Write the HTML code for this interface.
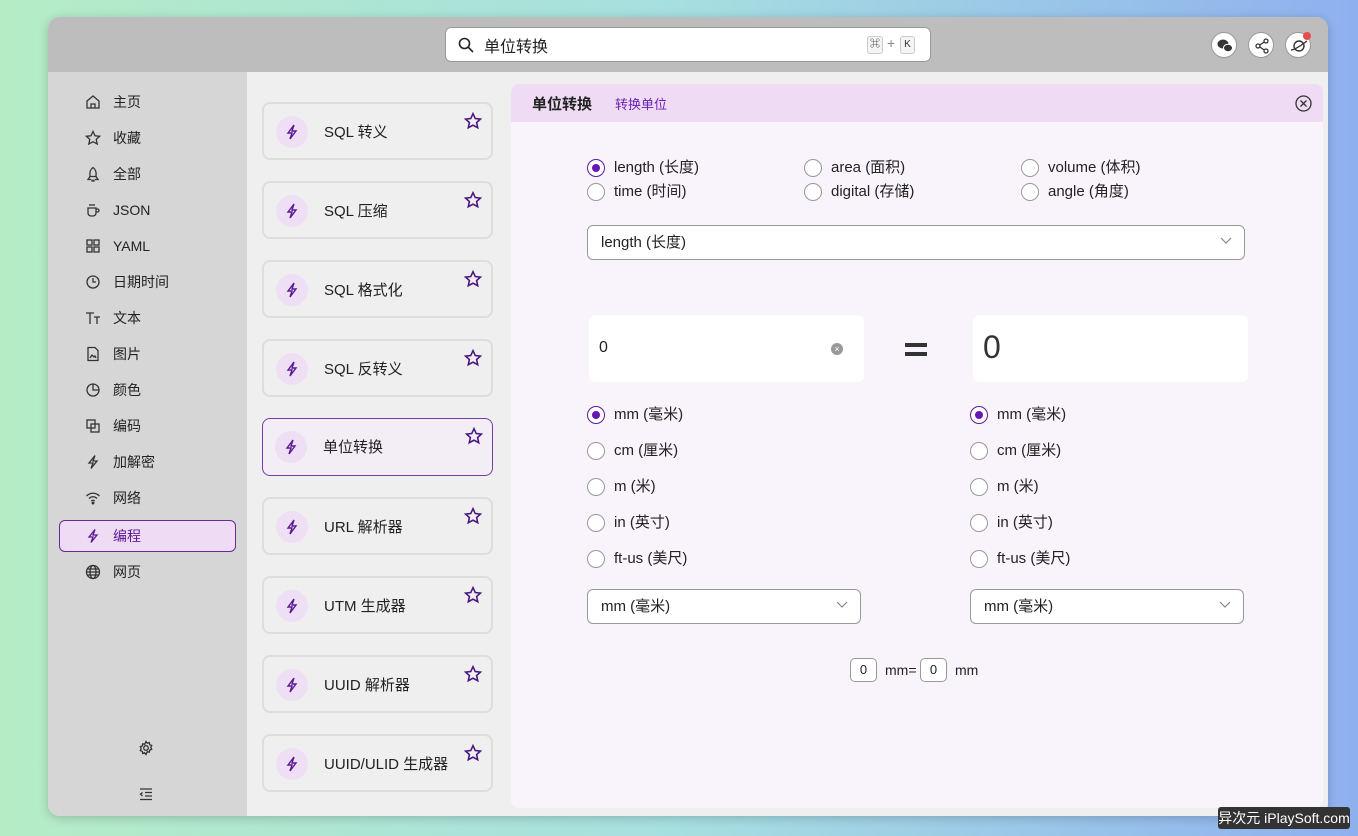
<!DOCTYPE html>
<html><head><meta charset="utf-8"><style>
*{box-sizing:border-box;margin:0;padding:0}
body{width:1358px;height:836px;overflow:hidden;position:relative;font-family:"Liberation Sans","Noto Sans CJK SC",sans-serif;color:#222;background:linear-gradient(90deg,#b5ecc6 0%,#a6dfe0 50%,#8fb0ef 100%)}
.a{position:absolute}
.win{left:48px;top:17px;width:1280px;height:799px;border-radius:12px;overflow:hidden;background:#efefef;box-shadow:0 2px 10px rgba(0,0,0,.2)}
.hdr{left:0;top:0;width:1280px;height:55px;background:#bdbdbd}
.side{left:0;top:55px;width:199px;height:744px;background:#d6d6d6}
.search{left:397px;top:10px;width:486px;height:35px;background:#fff;border:1px solid #999;border-radius:6px;font-size:16px}
.kb{top:8px;height:18px;border:1px solid #ccc;border-radius:3px;font-size:10px;line-height:16px;text-align:center;background:#f4f4f4;color:#333}
.cb{width:26px;height:26px;border-radius:50%;background:#fff;border:1px solid #999;top:15px}
.ni{left:37px;font-size:14px;height:20px;line-height:20px;color:#222}
.ni svg{position:absolute;left:0;top:2px}
.ni span{position:absolute;left:28px;white-space:nowrap}
.card{left:214px;width:231px;height:58px;border:2px solid #ddd;border-radius:8px;background:#f0eff0}
.card .ic{position:absolute;left:12px;top:12px;width:32px;height:32px;border-radius:50%;background:#efdff5}
.card .t{position:absolute;left:60px;top:17px;font-size:15px;color:#222;white-space:nowrap}
.card .st{position:absolute;right:9px;top:8px}
.panel{left:463px;top:67px;width:812px;height:724px;background:#f9f4fb;border-radius:8px;overflow:hidden}
.ph{left:0;top:0;width:812px;height:38px;background:#efdcf4}
.r{font-size:15px;white-space:nowrap;height:18px;line-height:18px}
.r i{position:absolute;left:0;top:0;width:18px;height:18px;border-radius:50%;border:1.5px solid #999;background:#fff}
.r i.on{border-color:#5c1a9a}
.r i.on:after{content:"";position:absolute;left:3.5px;top:3.5px;width:8px;height:8px;border-radius:50%;background:#6a16b0}
.r span{position:absolute;left:27px}
.sel{height:35px;border:1px solid #999;border-radius:6px;background:#fff;font-size:15px;line-height:33px;padding-left:13px}
.sel svg{position:absolute;right:12px;top:11px}
.inp{background:#fff;border-radius:6px;height:67px}
.sm{height:24px;width:27px;border:1px solid #999;border-radius:5px;background:#fff;font-size:13px;text-align:center;line-height:22px}
</style></head><body>
<div class="a win">
 <div class="a hdr">
  <div class="a search">
   <svg class="a" style="left:12px;top:9px" width="16" height="16" viewBox="0 0 16 16"><circle cx="6.5" cy="6.5" r="5" fill="none" stroke="#222" stroke-width="1.6"/><path d="M10.3 10.3L15 15" stroke="#222" stroke-width="1.6"/></svg>
   <span class="a" style="left:38px;top:5px">单位转换</span>
   <div class="a kb" style="left:421px;width:16px">⌘</div>
   <span class="a" style="left:441px;top:7px;font-size:14px;color:#888">+</span>
   <div class="a kb" style="left:454px;width:15px">K</div>
  </div>
  <div class="a cb" style="left:1163px"><svg class="a" style="left:5px;top:6px" width="16" height="14" viewBox="0 0 16 14"><ellipse cx="6" cy="5" rx="5.5" ry="4.5" fill="#333"/><ellipse cx="11" cy="9" rx="4.5" ry="3.8" fill="#333" stroke="#fff" stroke-width="1"/></svg></div>
  <div class="a cb" style="left:1200px"><svg class="a" style="left:5px;top:5px" width="16" height="16" viewBox="0 0 16 16"><circle cx="12" cy="3" r="2" fill="none" stroke="#333" stroke-width="1.3"/><circle cx="4" cy="8" r="2" fill="none" stroke="#333" stroke-width="1.3"/><circle cx="12" cy="13" r="2" fill="none" stroke="#333" stroke-width="1.3"/><path d="M5.8 7L10.2 4M5.8 9l4.4 3" stroke="#333" stroke-width="1.3"/></svg></div>
  <div class="a cb" style="left:1237px"><svg class="a" style="left:4px;top:5px" width="18" height="16" viewBox="0 0 18 16"><circle cx="9" cy="8" r="5" fill="none" stroke="#333" stroke-width="1.4"/><path d="M1 12C5 12 13 6 17 3" stroke="#333" stroke-width="1.4" fill="none"/></svg><div class="a" style="left:17px;top:-1px;width:8px;height:8px;border-radius:50%;background:#e94b4b"></div></div>
 </div>
 <div class="a side">
  <div class="a ni" style="top:20px"><svg width="16" height="16" viewBox="0 0 16 16" fill="none" stroke="#333" stroke-width="1.3"><path d="M2 7L8 2l6 5v7H2z"/><path d="M6 14v-4h4v4"/></svg><span>主页</span></div>
  <div class="a ni" style="top:56px"><svg width="16" height="16" viewBox="0 0 16 16" fill="none" stroke="#333" stroke-width="1.3"><path d="M8 1.5l2 4.3 4.6.5-3.4 3.1 1 4.6L8 11.7 3.8 14l1-4.6L1.4 6.3 6 5.8z"/></svg><span>收藏</span></div>
  <div class="a ni" style="top:92px"><svg width="16" height="16" viewBox="0 0 16 16" fill="none" stroke="#333" stroke-width="1.3"><path d="M8 1.5c3 2 3.5 5 3 9H5c-.5-4 0-7 3-9zM5 10.5l-2 3h3M11 10.5l2 3h-3M7 13.5v1.5h2v-1.5"/></svg><span>全部</span></div>
  <div class="a ni" style="top:128px"><svg width="16" height="16" viewBox="0 0 16 16" fill="none" stroke="#333" stroke-width="1.3"><path d="M3 6h8v5a3 3 0 01-3 3H6a3 3 0 01-3-3zM11 7h1.5a1.5 1.5 0 010 3H11M5 2v2M7 2v2M9 2v2"/></svg><span>JSON</span></div>
  <div class="a ni" style="top:164px"><svg width="16" height="16" viewBox="0 0 16 16" fill="none" stroke="#333" stroke-width="1.3"><rect x="2" y="2" width="5" height="5"/><rect x="9" y="2" width="5" height="5"/><rect x="2" y="9" width="5" height="5"/><rect x="9" y="9" width="5" height="5"/></svg><span>YAML</span></div>
  <div class="a ni" style="top:200px"><svg width="16" height="16" viewBox="0 0 16 16" fill="none" stroke="#333" stroke-width="1.3"><circle cx="8" cy="8" r="6"/><path d="M8 4v4h3"/></svg><span>日期时间</span></div>
  <div class="a ni" style="top:236px"><svg width="16" height="16" viewBox="0 0 16 16" fill="none" stroke="#333" stroke-width="1.3"><path d="M1 3h8M5 3v11M9 7h6M12 7v7"/></svg><span>文本</span></div>
  <div class="a ni" style="top:272px"><svg width="16" height="16" viewBox="0 0 16 16" fill="none" stroke="#333" stroke-width="1.3"><path d="M3 1.5h7l3 3v10H3z"/><path d="M5 12l2-3 2 2 1-1 1 2"/></svg><span>图片</span></div>
  <div class="a ni" style="top:308px"><svg width="16" height="16" viewBox="0 0 16 16" fill="none" stroke="#333" stroke-width="1.3"><circle cx="8" cy="8" r="6"/><path d="M8 2v6h6"/></svg><span>颜色</span></div>
  <div class="a ni" style="top:344px"><svg width="16" height="16" viewBox="0 0 16 16" fill="none" stroke="#333" stroke-width="1.3"><rect x="2" y="2" width="8" height="8"/><rect x="6" y="6" width="8" height="8"/></svg><span>编码</span></div>
  <div class="a ni" style="top:380px"><svg width="16" height="16" viewBox="0 0 16 16" fill="none" stroke="#333" stroke-width="1.3"><path d="M10 1.5L4 9h4l-2 5.5L12 7H8z"/></svg><span>加解密</span></div>
  <div class="a ni" style="top:416px"><svg width="16" height="16" viewBox="0 0 16 16" fill="none" stroke="#333" stroke-width="1.3"><path d="M1.5 6a9 9 0 0113 0M4 8.5a5.5 5.5 0 018 0M6.3 11a2.5 2.5 0 013.4 0"/><circle cx="8" cy="13" r=".8" fill="#333"/></svg><span>网络</span></div>
  <div class="a" style="left:11px;top:448px;width:177px;height:32px;border:1.5px solid #6a2a9a;border-radius:6px;background:#efdcf4"></div>
  <div class="a ni" style="top:454px;color:#5b1a93"><svg width="16" height="16" viewBox="0 0 16 16" fill="none" stroke="#5b1a93" stroke-width="1.3"><path d="M10 1.5L4 9h4l-2 5.5L12 7H8z"/></svg><span>编程</span></div>
  <div class="a ni" style="top:490px"><svg width="16" height="16" viewBox="0 0 16 16" fill="none" stroke="#333" stroke-width="1.3"><circle cx="8" cy="8" r="6.5"/><ellipse cx="8" cy="8" rx="3" ry="6.5"/><path d="M1.5 8h13M2.5 5h11M2.5 11h11"/></svg><span>网页</span></div>
  <svg class="a" style="left:90px;top:668px" width="16" height="16" viewBox="0 0 16 16" fill="none" stroke="#333" stroke-width="1.3"><circle cx="8" cy="8" r="2.3"/><path d="M8 1.5l1.3 1.7 2-.6.4 2.1 2 .8-.9 1.9.9 1.9-2 .8-.4 2.1-2-.6L8 14.5l-1.3-1.7-2 .6-.4-2.1-2-.8.9-1.9-.9-1.9 2-.8.4-2.1 2 .6z"/></svg>
  <svg class="a" style="left:90px;top:714px" width="16" height="16" viewBox="0 0 16 16" fill="none" stroke="#333" stroke-width="1.3"><path d="M2 3h12M7 6.5h7M7 10h7M2 13.5h12M4.5 6.5L2.5 8.2l2 1.8"/></svg>
 </div>
 <div class="a" style="left:199px;top:55px;width:264px;height:744px;background:#efefef"></div>
 <div class="a card" style="top:85px"><div class="ic"></div><div class="t">SQL 转义</div></div>
 <div class="a card" style="top:164px"><div class="ic"></div><div class="t">SQL 压缩</div></div>
 <div class="a card" style="top:243px"><div class="ic"></div><div class="t">SQL 格式化</div></div>
 <div class="a card" style="top:322px"><div class="ic"></div><div class="t">SQL 反转义</div></div>
 <div class="a card" style="top:401px;border-color:#7a3aa8;border-width:1.5px;background:#f3eef5"><div class="ic"></div><div class="t">单位转换</div></div>
 <div class="a card" style="top:480px"><div class="ic"></div><div class="t">URL 解析器</div></div>
 <div class="a card" style="top:559px"><div class="ic"></div><div class="t">UTM 生成器</div></div>
 <div class="a card" style="top:638px"><div class="ic"></div><div class="t">UUID 解析器</div></div>
 <div class="a card" style="top:717px"><div class="ic"></div><div class="t">UUID/ULID 生成器</div></div>
 <div class="a panel">
  <div class="a ph">
   <span class="a" style="left:21px;top:9px;font-size:15px;font-weight:bold;color:#222">单位转换</span>
   <span class="a" style="left:104px;top:10px;font-size:13px;color:#6a1fb0">转换单位</span>
   <svg class="a" style="left:784px;top:11px" width="17" height="17" viewBox="0 0 17 17" fill="none" stroke="#333" stroke-width="1.3"><circle cx="8.5" cy="8.5" r="7.5"/><path d="M5.5 5.5l6 6M11.5 5.5l-6 6"/></svg>
  </div>
  <div class="a r" style="left:76px;top:75px"><i class="on"></i><span>length (长度)</span></div>
  <div class="a r" style="left:293px;top:75px"><i></i><span>area (面积)</span></div>
  <div class="a r" style="left:510px;top:75px"><i></i><span>volume (体积)</span></div>
  <div class="a r" style="left:76px;top:99px"><i></i><span>time (时间)</span></div>
  <div class="a r" style="left:293px;top:99px"><i></i><span>digital (存储)</span></div>
  <div class="a r" style="left:510px;top:99px"><i></i><span>angle (角度)</span></div>
  <div class="a sel" style="left:76px;top:141px;width:658px">length (长度)<svg width="12" height="8" viewBox="0 0 12 8"><path d="M1 1l5 5 5-5" fill="none" stroke="#888" stroke-width="1.2"/></svg></div>
  <div class="a inp" style="left:78px;top:231px;width:275px"><span class="a" style="left:10px;top:24px;font-size:16px">0</span><div class="a" style="left:242px;top:28px;width:12px;height:12px;border-radius:50%;background:#999;color:#fff;font-size:9px;line-height:12px;text-align:center">×</div></div>
  <div class="a" style="left:394px;top:259px;width:22px;height:4px;background:#333"></div>
  <div class="a" style="left:394px;top:268px;width:22px;height:4px;background:#333"></div>
  <div class="a inp" style="left:462px;top:231px;width:275px"><span class="a" style="left:10px;top:14px;font-size:32px;color:#333">0</span></div>
  <div class="a r" style="left:76px;top:322px"><i class="on"></i><span>mm (毫米)</span></div>
  <div class="a r" style="left:76px;top:358px"><i></i><span>cm (厘米)</span></div>
  <div class="a r" style="left:76px;top:394px"><i></i><span>m (米)</span></div>
  <div class="a r" style="left:76px;top:430px"><i></i><span>in (英寸)</span></div>
  <div class="a r" style="left:76px;top:466px"><i></i><span>ft-us (美尺)</span></div>
  <div class="a r" style="left:459px;top:322px"><i class="on"></i><span>mm (毫米)</span></div>
  <div class="a r" style="left:459px;top:358px"><i></i><span>cm (厘米)</span></div>
  <div class="a r" style="left:459px;top:394px"><i></i><span>m (米)</span></div>
  <div class="a r" style="left:459px;top:430px"><i></i><span>in (英寸)</span></div>
  <div class="a r" style="left:459px;top:466px"><i></i><span>ft-us (美尺)</span></div>
  <div class="a sel" style="left:76px;top:505px;width:274px">mm (毫米)<svg width="12" height="8" viewBox="0 0 12 8"><path d="M1 1l5 5 5-5" fill="none" stroke="#888" stroke-width="1.2"/></svg></div>
  <div class="a sel" style="left:459px;top:505px;width:274px">mm (毫米)<svg width="12" height="8" viewBox="0 0 12 8"><path d="M1 1l5 5 5-5" fill="none" stroke="#888" stroke-width="1.2"/></svg></div>
  <div class="a sm" style="left:339px;top:574px">0</div>
  <span class="a" style="left:374px;top:578px;font-size:14px">mm=</span>
  <div class="a sm" style="left:409px;top:574px">0</div>
  <span class="a" style="left:444px;top:578px;font-size:14px">mm</span>
 </div>
</div>
<div class="a" style="left:1218px;top:807px;width:132px;height:22px;background:#333;border-radius:3px;color:#fff;font-size:14px;line-height:22px;text-align:center;white-space:nowrap">异次元 iPlaySoft.com</div>
<script>
document.querySelectorAll('.card').forEach(function(c){
 c.querySelector('.ic').innerHTML='<svg style="position:absolute;left:9px;top:8px" width="14" height="16" viewBox="0 0 14 16" fill="none" stroke="#5b1a93" stroke-width="1.4"><path d="M9 1L3 9h4l-2 6 6-8H7z"/></svg>';
 var s=document.createElement('div');s.className='st';
 s.innerHTML='<svg width="18" height="18" viewBox="0 0 16 16" fill="none" stroke="#4a1680" stroke-width="1.4"><path d="M8 1.5l2 4.3 4.6.5-3.4 3.1 1 4.6L8 11.7 3.8 14l1-4.6L1.4 6.3 6 5.8z"/></svg>';
 c.appendChild(s);
});
</script>
</body></html>
